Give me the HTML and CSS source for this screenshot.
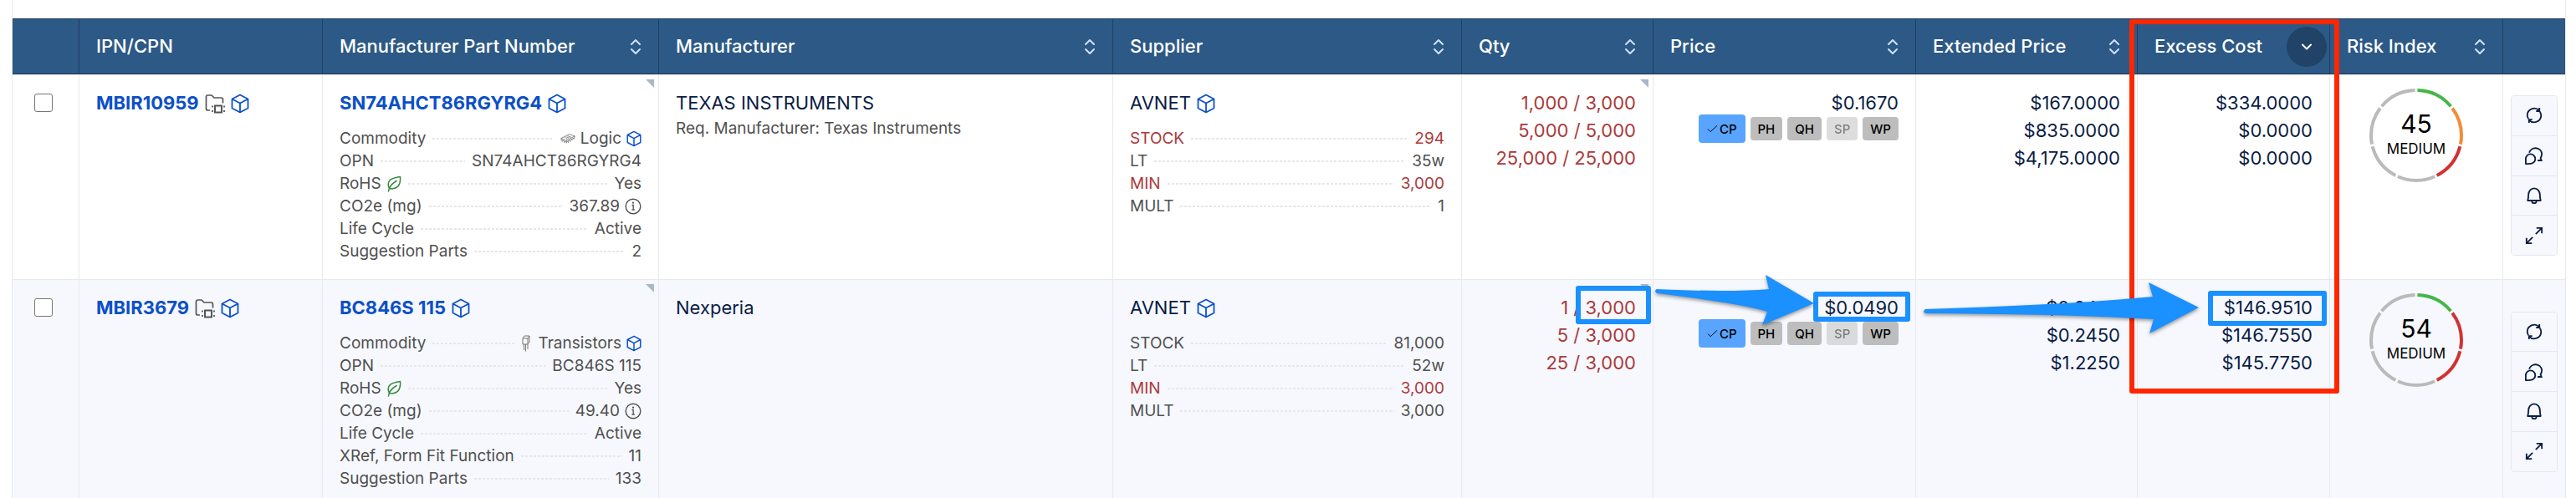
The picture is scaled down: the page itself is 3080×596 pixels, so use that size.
FILE: index.html
```html
<!DOCTYPE html>
<html lang="en">
<head>
    <meta charset="UTF-8">
    <meta name="viewport" content="width=device-width, initial-scale=1.0">
    <title>BOM Parts</title>
    <link rel="stylesheet" href="styles.css">
</head>
<body>
<svg class="sprite" aria-hidden="true">
    <symbol id="cube" viewBox="0 0 22 24"><path d="M11 1.5 20.5 6.5V17.5L11 22.5 1.5 17.5V6.5ZM1.5 6.5 11 11.5 20.5 6.5M11 11.5V22.5" fill="none" stroke="currentColor" stroke-width="1.8" stroke-linejoin="round"/></symbol>
    <symbol id="folder" viewBox="0 0 24 24"><path d="M6 20H3.5Q1.5 20 1.5 18V4Q1.5 2 3.5 2H8L11 5H19.5Q21.5 5 21.5 7V11.5" fill="none" stroke="currentColor" stroke-width="1.7"/><path d="M12 14.5H20V22.5H12Z" fill="none" stroke="currentColor" stroke-width="2"/><path d="M9 14.5v2M9 20v2M23 14.5v2M23 20v2" stroke="currentColor" stroke-width="1.8"/></symbol>
    <symbol id="sort" viewBox="0 0 14 20"><path d="M2 7 7 2 12 7M2 13 7 18 12 13" fill="none" stroke="currentColor" stroke-width="2" stroke-linecap="round" stroke-linejoin="round"/></symbol>
    <symbol id="down" viewBox="0 0 14 10"><path d="M2 2.5 7 7.5 12 2.5" fill="none" stroke="currentColor" stroke-width="2" stroke-linecap="round" stroke-linejoin="round"/></symbol>
    <symbol id="leaf" viewBox="0 0 18 20"><path d="M2.5 19Q3 12 12 6.5M3.2 15C-.5 6 6 3 16.5 1.5C17.5 11 13 17.5 3.5 15.5" fill="none" stroke="currentColor" stroke-width="1.5" stroke-linecap="round" stroke-linejoin="round"/></symbol>
    <symbol id="info" viewBox="0 0 20 20"><circle cx="10" cy="10" r="8.8" fill="none" stroke="currentColor" stroke-width="1.4"/><path d="M8.5 8.5H10.2V14M8.3 14.2H12" fill="none" stroke="currentColor" stroke-width="1.3"/><circle cx="10" cy="5.7" r="1.1" fill="currentColor"/></symbol>
    <symbol id="chip" viewBox="0 0 20 14"><path d="M1 6.5 12 1 19 3.5 8 9.5ZM1 6.5V8.5L8 11.5 19 5.5V3.5M8 9.5V13M5 10.5V12.5M2.5 9V11M10.5 10.5V12.5M13 9V11M15.5 7.5V9.5M18 6V8M7.5 6.5 12 4.2 14 5" fill="none" stroke="currentColor"/><path d="M5 6 11 3M8 7.5 14 4.5" stroke="currentColor" stroke-dasharray="1 1"/></symbol>
    <symbol id="transistor" viewBox="0 0 10 20"><path d="M1 4 3 1H9V8L7 11H1ZM1 4H7L9 1M7 4V11M2.5 11V18M4.5 11V19.5M7 11V17" fill="none" stroke="currentColor"/></symbol>
    <symbol id="refresh" viewBox="0 0 24 24"><path d="M4.5 16.5A9 9 0 0 1 3 12 9 9 0 0 1 18.5 5.7M19.5 7.5A9 9 0 0 1 21 12 9 9 0 0 1 5.500 18.3M18.800 2.2V6.5H14.5M5.200 21.800V17.5H9.5" fill="none" stroke="currentColor" stroke-width="2"/></symbol>
    <symbol id="chat" viewBox="0 0 24 24"><path d="M5.5 8.5A8.5 8.5 0 0 1 22 9.5C22 12.5 21 14.5 20.3 15.5L21.5 18.5H16.5" fill="none" stroke="currentColor" stroke-width="2"/><path d="M1 23V16.5A6.200 6.200 0 1 1 7.200 22.700Q4 23 1 23Z" fill="none" stroke="currentColor" stroke-width="2" stroke-linejoin="round"/></symbol>
    <symbol id="bell" viewBox="0 0 24 24"><path d="M3.5 18.5Q4.5 16 4.500 11A7.500 8.500 0 0 1 19.500 11Q19.500 16 20.500 18.500ZM9 19A3 3 0 0 0 15 19" fill="none" stroke="currentColor" stroke-width="2" stroke-linejoin="round"/></symbol>
    <symbol id="expand" viewBox="0 0 24 24"><path d="M14 10 22 2M15 2H22V9M10 14 2 22M2 15V22H9" fill="none" stroke="currentColor" stroke-width="2"/></symbol>
</svg>

<div class="grid">
<table>
    <colgroup>
        <col class="c-check"><col class="c-ipn"><col class="c-mpn"><col class="c-mfr"><col class="c-supplier"><col class="c-qty">
        <col class="c-price"><col class="c-ext"><col class="c-excess"><col class="c-risk"><col class="c-actions">
    </colgroup>
    <thead>
        <tr>
            <th></th>
            <th><div class="head">IPN/CPN</div></th>
            <th><div class="head">Manufacturer Part Number <button class="sort" aria-label="Sort"><svg><use href="#sort"/></svg></button></div></th>
            <th><div class="head">Manufacturer <button class="sort" aria-label="Sort"><svg><use href="#sort"/></svg></button></div></th>
            <th><div class="head">Supplier <button class="sort" aria-label="Sort"><svg><use href="#sort"/></svg></button></div></th>
            <th><div class="head">Qty <button class="sort" aria-label="Sort"><svg><use href="#sort"/></svg></button></div></th>
            <th><div class="head">Price <button class="sort" aria-label="Sort"><svg><use href="#sort"/></svg></button></div></th>
            <th><div class="head">Extended Price <button class="sort" aria-label="Sort"><svg><use href="#sort"/></svg></button></div></th>
            <th class="excess">
                <div class="head">Excess Cost <button class="sort active" aria-label="Sorted descending"><svg><use href="#down"/></svg></button></div>
                <div class="mark mark-column"></div>
            </th>
            <th><div class="head">Risk Index <button class="sort" aria-label="Sort"><svg><use href="#sort"/></svg></button></div></th>
            <th></th>
        </tr>
    </thead>
    <tbody>
        <tr>
            <td class="check"><input type="checkbox" aria-label="Select MBIR10959"></td>
            <td>
                <div class="name"><a href="#">MBIR10959</a><svg class="folder"><use href="#folder"/></svg><svg class="cube"><use href="#cube"/></svg></div>
            </td>
            <td class="note">
                <div class="name"><a href="#">SN74AHCT86RGYRG4</a><svg class="cube"><use href="#cube"/></svg></div>
                <ul class="specs">
                    <li>Commodity <span class="dots"></span><svg class="part"><use href="#chip"/></svg>Logic<svg class="cube small"><use href="#cube"/></svg></li>
                    <li>OPN <span class="dots"></span>SN74AHCT86RGYRG4</li>
                    <li>RoHS <svg class="leaf"><use href="#leaf"/></svg><span class="dots"></span>Yes</li>
                    <li>CO2e (mg) <span class="dots"></span>367.89<svg class="info"><use href="#info"/></svg></li>
                    <li>Life Cycle <span class="dots"></span>Active</li>
                    <li>Suggestion Parts <span class="dots"></span>2</li>
                </ul>
            </td>
            <td>
                <div class="name">TEXAS INSTRUMENTS</div>
                <p class="req">Req. Manufacturer: Texas Instruments</p>
            </td>
            <td>
                <div class="name">AVNET<svg class="cube"><use href="#cube"/></svg></div>
                <ul class="specs">
                    <li class="warn">STOCK <span class="dots"></span>294</li>
                    <li>LT <span class="dots"></span>35w</li>
                    <li class="warn">MIN <span class="dots"></span>3,000</li>
                    <li>MULT <span class="dots"></span>1</li>
                </ul>
            </td>
            <td class="note num warn">
                <div>1,000 / 3,000</div>
                <div>5,000 / 5,000</div>
                <div>25,000 / 25,000</div>
            </td>
            <td class="num">
                <div>$0.1670</div>
                <div class="chips">
                    <button class="chip on"><svg viewBox="0 0 14 10"><path d="M1 5.5 4.5 9 13 1"/></svg>CP</button>
                    <button class="chip">PH</button>
                    <button class="chip">QH</button>
                    <button class="chip" disabled>SP</button>
                    <button class="chip">WP</button>
                </div>
            </td>
            <td class="num">
                <div>$167.0000</div>
                <div>$835.0000</div>
                <div>$4,175.0000</div>
            </td>
            <td class="num">
                <div>$334.0000</div>
                <div>$0.0000</div>
                <div>$0.0000</div>
            </td>
            <td class="risk">
                <div class="gauge">
                    <svg viewBox="0 0 112 112">
                        <circle class="track" cx="56" cy="56" r="54" pathLength="70"/>
                        <circle class="green" cx="56" cy="56" r="54" pathLength="70"/>
                        <circle class="orange" cx="56" cy="56" r="54" pathLength="70"/>
                        <circle class="red" cx="56" cy="56" r="54" pathLength="70"/>
                    </svg>
                    <strong>45</strong>
                    <span>MEDIUM</span>
                </div>
            </td>
            <td class="actions">
                <div class="tools">
                    <button aria-label="Refresh"><svg><use href="#refresh"/></svg></button>
                    <button aria-label="Comments"><svg><use href="#chat"/></svg></button>
                    <button aria-label="Alerts"><svg><use href="#bell"/></svg></button>
                    <button aria-label="Expand"><svg><use href="#expand"/></svg></button>
                </div>
            </td>
        </tr>
        <tr>
            <td class="check"><input type="checkbox" aria-label="Select MBIR3679"></td>
            <td>
                <div class="name"><a href="#">MBIR3679</a><svg class="folder"><use href="#folder"/></svg><svg class="cube"><use href="#cube"/></svg></div>
            </td>
            <td class="note">
                <div class="name"><a href="#">BC846S 115</a><svg class="cube"><use href="#cube"/></svg></div>
                <ul class="specs">
                    <li>Commodity <span class="dots"></span><svg class="part narrow"><use href="#transistor"/></svg>Transistors<svg class="cube small"><use href="#cube"/></svg></li>
                    <li>OPN <span class="dots"></span>BC846S 115</li>
                    <li>RoHS <svg class="leaf"><use href="#leaf"/></svg><span class="dots"></span>Yes</li>
                    <li>CO2e (mg) <span class="dots"></span>49.40<svg class="info"><use href="#info"/></svg></li>
                    <li>Life Cycle <span class="dots"></span>Active</li>
                    <li>XRef, Form Fit Function <span class="dots"></span>11</li>
                    <li>Suggestion Parts <span class="dots"></span>133</li>
                </ul>
            </td>
            <td>
                <div class="name">Nexperia</div>
            </td>
            <td>
                <div class="name">AVNET<svg class="cube"><use href="#cube"/></svg></div>
                <ul class="specs">
                    <li>STOCK <span class="dots"></span>81,000</li>
                    <li>LT <span class="dots"></span>52w</li>
                    <li class="warn">MIN <span class="dots"></span>3,000</li>
                    <li>MULT <span class="dots"></span>3,000</li>
                </ul>
            </td>
            <td class="note num warn">
                <div>1 / 3,000</div>
                <div>5 / 3,000</div>
                <div>25 / 3,000</div>
                <div class="mark mark-qty"></div>
            </td>
            <td class="num">
                <div>$0.0490</div>
                <div class="chips">
                    <button class="chip on"><svg viewBox="0 0 14 10"><path d="M1 5.5 4.5 9 13 1"/></svg>CP</button>
                    <button class="chip">PH</button>
                    <button class="chip">QH</button>
                    <button class="chip" disabled>SP</button>
                    <button class="chip">WP</button>
                </div>
                <div class="mark mark-price"></div>
                <svg class="arrow arrow-qty" viewBox="0 0 196 70"><path d="M4 20Q90 24 138 20L134 3 192 37 130 63 136 47Q110 38 4 25Q0 22 4 20Z"/></svg>
            </td>
            <td class="num">
                <div>$0.0490</div>
                <div>$0.2450</div>
                <div>$1.2250</div>
                <svg class="arrow arrow-price" viewBox="0 0 345 74"><path d="M11 36Q180 31 283 21L278 4 338 34 279 65 284 48Q180 42 11 41Q7 39 11 36Z"/></svg>
            </td>
            <td class="num">
                <div>$146.9510</div>
                <div>$146.7550</div>
                <div>$145.7750</div>
                <div class="mark mark-excess"></div>
            </td>
            <td class="risk">
                <div class="gauge">
                    <svg viewBox="0 0 112 112">
                        <circle class="track" cx="56" cy="56" r="54" pathLength="70"/>
                        <circle class="green" cx="56" cy="56" r="54" pathLength="70"/>
                        <circle class="orange high" cx="56" cy="56" r="54" pathLength="70"/>
                        <circle class="red" cx="56" cy="56" r="54" pathLength="70"/>
                    </svg>
                    <strong>54</strong>
                    <span>MEDIUM</span>
                </div>
            </td>
            <td class="actions">
                <div class="tools">
                    <button aria-label="Refresh"><svg><use href="#refresh"/></svg></button>
                    <button aria-label="Comments"><svg><use href="#chat"/></svg></button>
                    <button aria-label="Alerts"><svg><use href="#bell"/></svg></button>
                    <button aria-label="Expand"><svg><use href="#expand"/></svg></button>
                </div>
            </td>
        </tr>
    </tbody>
</table>
</div>
</body>
</html>
```

FILE: styles.css
```css
* {
  box-sizing: border-box;
}
body {
  margin: 0;
  background: #fff;
  color: #0b1d45;
  font-family: Inter, "Liberation Sans", sans-serif;
  font-size: 22px;
  line-height: 33px;
}
button {
  font-family: inherit;
  border: none;
  cursor: pointer;
}
svg {
  display: block;
  flex: none;
}
.sprite {
  position: absolute;
  width: 0;
  height: 0;
}
.grid {
  height: 100vh;
  margin: 0 12px 0 14px;
  padding-top: 22px;
  border-left: 1px solid #e6e9ed;
  border-right: 1px solid #e6e9ed;
  overflow: hidden;
}
table {
  width: 100%;
  table-layout: fixed;
  border-collapse: separate;
  border-spacing: 0;
}
.c-check { width: 80px; }
.c-ipn { width: 291px; }
.c-mpn { width: 402px; }
.c-supplier { width: 417px; }
.c-qty { width: 229px; }
.c-price { width: 314px; }
.c-ext { width: 265px; }
.c-excess { width: 230px; }
.c-risk { width: 207px; }
.c-actions { width: 74px; }

/* header */
th {
  height: 67px;
  padding: 0 20px;
  background: #2d5986;
  border-top: 1px solid #1c3a5c;
  border-bottom: 1px solid #1c3a5c;
  border-right: 1px solid #1f3f64;
  color: #fff;
  font-weight: 500;
  text-align: left;
}
th:last-child,
td:last-child {
  border-right: none;
}
.head {
  display: flex;
  align-items: center;
  justify-content: space-between;
  white-space: nowrap;
}
.sort {
  padding: 0;
  background: none;
  color: #cfe1f7;
}
.sort svg {
  width: 14px;
  height: 20px;
}
.excess {
  position: relative;
  padding-right: 3px;
}
.sort.active {
  display: flex;
  align-items: center;
  justify-content: center;
  width: 48px;
  height: 48px;
  border-radius: 50%;
  background: #214367;
  color: #fff;
}
.sort.active svg {
  height: 10px;
}

/* rows */
td {
  position: relative;
  padding: 17px 20px 20px;
  border-top: 1px solid #e6e9ed;
  border-right: 1px solid #e6e9ed;
  vertical-align: top;
}
tbody tr:nth-child(even) {
  background: #f6f8fd;
}
.check {
  padding: 22px 0 0;
}
.check input {
  appearance: none;
  display: block;
  width: 22px;
  height: 22px;
  margin: 0 0 0 26px;
  background: #fff;
  border: 1px solid #767676;
  border-radius: 3px;
}
.name {
  display: flex;
  align-items: center;
  gap: 7px;
}
.name a {
  color: #0b50c8;
  font-weight: 700;
  text-decoration: none;
}
.cube {
  width: 22px;
  height: 24px;
  color: #0b50c8;
}
.cube.small {
  width: 18px;
  height: 20px;
}
.folder {
  width: 24px;
  height: 24px;
  color: #555;
}
.note::after {
  content: "";
  position: absolute;
  top: 5px;
  right: 5px;
  width: 10px;
  height: 10px;
  background: #a9b8c6;
  clip-path: polygon(0 0, 100% 0, 100% 100%);
}
.specs {
  margin: 12px 0 0;
  padding: 0;
  list-style: none;
}
.specs li {
  display: flex;
  align-items: center;
  gap: 6px;
  color: #505050;
  font-size: 19px;
  line-height: 27px;
}
.dots {
  flex: 1;
  height: 2px;
  margin: 0 2px;
  background: repeating-linear-gradient(90deg, #e6e7e9 0 3px, transparent 3px 5px);
}
.part {
  width: 18px;
  height: 14px;
  color: #777;
}
.part.narrow {
  width: 10px;
  height: 20px;
  margin-right: 4px;
}
.leaf {
  width: 18px;
  height: 20px;
  color: #3a8a3e;
}
.info {
  width: 20px;
  height: 20px;
}
.req {
  margin: 0;
  color: #505050;
  font-size: 19px;
  line-height: 27px;
}
.num {
  text-align: right;
}
.num.warn,
.specs .warn {
  color: #ab3a3a;
}

/* price chips */
.chips {
  display: flex;
  align-items: center;
  justify-content: flex-end;
  gap: 6px;
  margin-top: -3px;
}
.chip {
  height: 28px;
  padding: 0 9px;
  border-radius: 4px;
  background: #bdbdbd;
  color: #000;
  font-size: 15px;
  font-weight: 500;
}
.chip.on {
  display: flex;
  align-items: center;
  gap: 2px;
  height: 34px;
  padding: 0 10px;
  background: #58a4ff;
}
.chip.on svg {
  width: 13px;
  height: 10px;
  fill: none;
  stroke: #000;
}
.chip:disabled {
  opacity: 0.5;
}

/* risk gauge */
.gauge {
  position: relative;
  display: flex;
  flex-direction: column;
  align-items: center;
  justify-content: center;
  width: 112px;
  height: 112px;
  margin: -1px auto 0;
  color: #000;
}
.gauge svg {
  position: absolute;
  inset: 0;
  transform: rotate(-90deg);
}
.gauge circle {
  fill: none;
  stroke-width: 4;
}
.gauge .track {
  stroke: #bababa;
  stroke-dasharray: 0 30.3 9.4 0.6 9.4 0.6 9.4 0.6 9.4 0.6;
}
.gauge .green {
  stroke: #45b649;
  stroke-dasharray: 0 0.3 9.4 70;
}
.gauge .orange {
  stroke: #f08c3a;
  stroke-dasharray: 0 10.3 9.4 70;
}
.gauge .red {
  stroke: #d03232;
  stroke-dasharray: 0 20.3 9.4 70;
}
.gauge .high {
  stroke: #d03232;
}
.gauge strong {
  font-size: 30px;
  font-weight: 400;
  line-height: 33px;
}
.gauge span {
  font-size: 17px;
  line-height: 27px;
}

/* row tools */
.actions {
  padding: 0 0 4px;
  vertical-align: middle;
}
.tools {
  display: flex;
  flex-direction: column;
  width: 56px;
  height: 192px;
  margin: 0 auto;
  border: 1px solid #e4e7ee;
  border-radius: 4px;
  overflow: hidden;
}
.tools button {
  display: flex;
  flex: 1;
  align-items: center;
  justify-content: center;
  padding: 0;
  background: #f6f8fd;
  color: #0b1d45;
}
.tools button + button {
  border-top: 1px solid #e4e7ee;
}
.tools svg {
  width: 22px;
  height: 22px;
}

/* callouts drawn over the table */
.mark {
  position: absolute;
  z-index: 2;
  border: 6px solid #1b90ff;
  border-radius: 3px;
  pointer-events: none;
}
.mark-column {
  top: 0;
  left: -10px;
  right: -12px;
  height: 448px;
  border-color: #ff2600;
}
.mark-qty {
  top: 7px;
  right: 2px;
  width: 90px;
  height: 46px;
}
.mark-price {
  top: 14px;
  right: 6px;
  width: 116px;
  height: 36px;
}
.mark-excess {
  top: 13px;
  right: 3px;
  width: 142px;
  height: 42px;
}
.arrow {
  position: absolute;
  z-index: 3;
  fill: #1b90ff;
  filter: drop-shadow(0 2px 2px rgba(0, 0, 0, 0.4));
}
.arrow-qty {
  top: -9px;
  left: 0;
  width: 196px;
  height: 70px;
}
.arrow-price {
  top: -1px;
  left: 0;
  width: 345px;
  height: 74px;
}
```
